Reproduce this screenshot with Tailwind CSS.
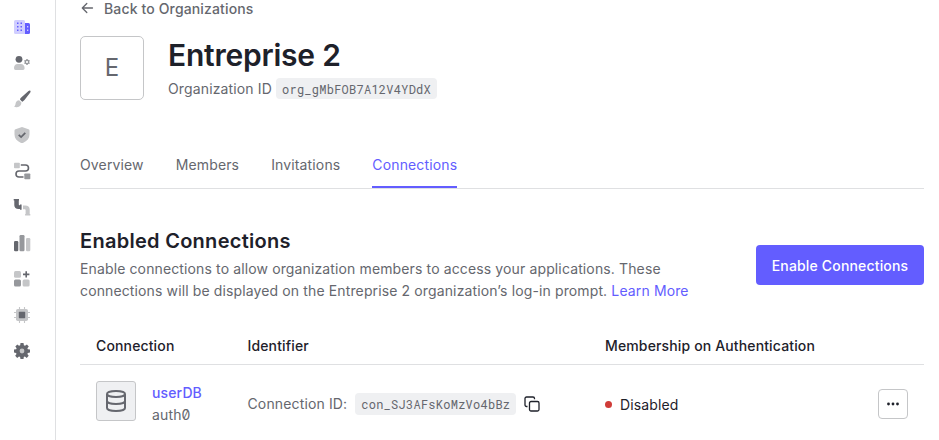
<!DOCTYPE html>
<html lang="en">
<head>
<meta charset="utf-8">
<title>Entreprise 2 - Connections</title>
<script src="https://cdn.jsdelivr.net/npm/@tailwindcss/browser@4"></script>
</head>
<body class="bg-white overflow-hidden font-['Inter',sans-serif] text-[14px] tracking-[0.14px] text-[#65676e]">
<div class="flex h-[440px] w-[939px] overflow-hidden">
  <nav class="flex w-[56px] shrink-0 flex-col gap-5 border-r border-[#dfe0e2] pl-[14px] pt-[19px]">
    <svg class="size-4 shrink-0" viewBox="0 0 16 16"><path d="M1.500 1h8A1.500 1.500 0 0 1 11 2.500V15H1.500A1.500 1.500 0 0 1 0 13.500v-11A1.500 1.500 0 0 1 1.500 1z" fill="#d0ceff"/><path d="M11 4h3.500A1.500 1.500 0 0 1 16 5.500v8a1.500 1.500 0 0 1-1.500 1.500H11z" fill="#635dff"/><path d="M3 3.500h1.500V5H3zM6.500 3.500H8V5H6.500zM3 7h1.500v1.500H3zM6.500 7H8v1.500H6.500zM3 10.500h1.500V12H3zM6.500 10.500H8V12H6.500z" fill="#635dff"/><path d="M13 7h1.300v1.500H13zM13 10.500h1.300V12H13z" fill="#d0ceff"/></svg>
    <svg class="size-4 shrink-0" viewBox="0 0 16 16"><circle cx="5" cy="4.300" r="3.400" fill="#65676e"/><path d="M3.500 9h3.300C9.300 9 10.600 10.800 10.600 13c0 1.300-.5 2-1.600 2H1.600C.5 15 0 14.300 0 13c0-2.200 1.200-4 3.500-4z" fill="#c5c6c8"/><circle cx="13" cy="7" r="1.750" fill="none" stroke="#96989c" stroke-width="1.300"/><path d="M13 4v1M13 9v1M10.400 5.500l.9.500M14.700 8l.9.500M10.400 8.500l.9-.5M14.700 6l.9-.5" stroke="#96989c" stroke-width="1.300"/></svg>
    <svg class="size-4 shrink-0 overflow-visible" viewBox="0 0 16 16"><path d="M16.300-.2c.5.500.3 1.200-.2 1.900l-5.600 7.400c-.7.900-1.600 1.500-2.300 1.600L6 8.500c.1-.8.600-1.500 1.500-2.200L14.500.1c.7-.6 1.400-.7 1.800-.3z" fill="#65676e"/><path d="M5.100 9.300l2.300 2.300c.1 2.700-1.700 4.700-4.400 4.700-1.200 0-2.400-.3-3-.8 1.300-.6 1.300-1.600 1.600-3 .3-1.900 1.500-3.100 3.500-3.200z" fill="#c5c6c8"/></svg>
    <svg class="size-4 shrink-0" viewBox="0 0 16 16"><path d="M8 0l6.500 2.200c.7.200 1 .6 1 1.300v4c0 4-2.600 6.900-7.500 8.900C3.100 14.400.5 11.500.5 7.500v-4c0-.7.300-1.100 1-1.300z" fill="#c5c6c8"/><path d="M4.700 7.900l2.400 2.200 4.200-4.200" fill="none" stroke="#65676e" stroke-width="1.800"/></svg>
    <svg class="size-4 shrink-0 overflow-visible" viewBox="0 0 16 16"><rect x="0" y="-.3" width="5.800" height="5.500" rx=".8" fill="#c5c6c8"/><rect x="10.300" y="10.500" width="6" height="5.800" rx=".8" fill="#96989c"/><path d="M6.800 2h4.700a3 3 0 0 1 0 6H5a3 3 0 0 0 0 6h4.500" fill="none" stroke="#65676e" stroke-width="1.600"/></svg>
    <svg class="size-4 shrink-0 overflow-visible" viewBox="0 0 16 16"><path d="M-.3 0h5.300v1.500h-.2v3.700c0 .8.300 1.100 1.100 1.100H6V5.500h1.600v5.300H6V10H4.500C2 10 .3 8.700.3 6.300V1.500h-.6z" fill="#65676e"/><path d="M9 6.500h2.300c2.700 0 4.400 1.300 4.400 4V15h.6v1.500h-5.200V15h.5v-3.700c0-.8-.3-1.100-1.100-1.100H9z" fill="#c5c6c8"/></svg>
    <svg class="size-4 shrink-0 overflow-visible" viewBox="0 0 16 16"><rect x="0" y="6" width="4.300" height="10.200" rx="1.200" fill="#65676e"/><rect x="5.500" y="0" width="5" height="16.200" rx="1.200" fill="#96989c"/><rect x="12" y="3" width="4.300" height="13.200" rx="1.200" fill="#c5c6c8"/></svg>
    <svg class="size-4 shrink-0 overflow-visible" viewBox="0 0 16 16"><rect x="0" y="0" width="7" height="6.800" rx="1.500" fill="#c5c6c8"/><rect x="0" y="8.500" width="7" height="7" rx="1.500" fill="#96989c"/><rect x="8.600" y="8.500" width="7" height="7" rx="1.500" fill="#c5c6c8"/><path d="M12.200.2v6.400M9 3.400h6.400" stroke="#65676e" stroke-width="1.600"/></svg>
    <svg class="size-4 shrink-0" viewBox="0 0 16 16"><path d="M5.500 0v16M10.500 0v16M0 5.500h16M0 10.500h16" stroke="#c5c6c8" stroke-width="1.100"/><rect x="2" y="2" width="12" height="12" rx="1.800" fill="#c5c6c8"/><rect x="4.800" y="4.800" width="6.400" height="6.400" rx=".6" fill="#65676e"/></svg>
    <svg class="size-4 shrink-0" viewBox="0 0 16 16"><path d="M6.500 0h3l.4 2.200 1.100.5L12.900 1.400 14.800 3.400 13.400 5.200l.4 1.100 2.200.3v3l-2.200.3-.4 1.100 1.300 1.800-2 2.100-1.800-1.400-1.100.5L9.500 16h-3l-.4-2-1.100-.5-1.800 1.400-2-2.100 1.300-1.800-.4-1.100L0 9.600v-3l2.200-.3.400-1.100L1.300 3.400l2-2L5 2.700l1.200-.5z" fill="#65676e"/><circle cx="8" cy="8" r="2.400" fill="#c5c6c8"/></svg>
  </nav>

  <main class="flex w-[868px] shrink-0 flex-col pl-[24px]">
    <a class="flex h-[18px] items-center gap-[10px] pb-[2px] font-medium"><svg class="size-[14px] shrink-0" viewBox="0 0 14 14" fill="none" stroke="#65676e" stroke-width="1.300" stroke-linecap="round" stroke-linejoin="round"><path d="M12.500 7H2.500M6.800 2.500L2.300 7l4.500 4.500"/></svg><span>Back to Organizations</span></a>

    <header class="mt-[18px] flex h-[64px] gap-6">
      <div class="flex size-16 items-center justify-center rounded-[5px] border border-[#c5c6c8] text-[24px] tracking-normal">E</div>
      <div class="flex flex-col">
        <h1 class="h-[38px] text-[30px] leading-[38px] font-semibold tracking-[-0.22px] text-[#1e212a]">Entreprise 2</h1>
        <div class="mt-[4px] flex h-[21px] items-center gap-[4px]"><span>Organization ID</span><code class="flex h-[21px] items-center rounded-[4px] bg-[#eff0f2] px-[6px] font-['Roboto_Mono','Noto_Sans_Mono','Liberation_Mono',monospace] text-[12px] tracking-[0.25px]">org_gMbFOB7A12V4YDdX</code></div>
      </div>
    </header>

    <div class="mt-[49px] flex h-[40px] gap-8 border-b border-[#dfe0e2] leading-[32px]">
      <span>Overview</span><span>Members</span><span>Invitations</span><span class="h-[39px] border-b-2 border-[#635dff] text-[#635dff]">Connections</span>
    </div>

    <section class="mt-[40px] flex h-[74px] justify-between">
      <div>
        <h2 class="h-[29px] text-[20px] leading-[24px] font-semibold tracking-[0.28px] text-[#1e212a]">Enabled Connections</h2>
        <p class="leading-[22px] tracking-[0.127px] whitespace-nowrap">Enable connections to allow organization members to access your applications. These<br>connections will be displayed on the Entreprise 2 organization’s log-in prompt. <a class="text-[#635dff]">Learn More</a></p>
      </div>
      <button class="mt-[16px] h-[40px] w-[168px] rounded-[4px] bg-[#635dff] font-medium tracking-[0.17px] text-white">Enable Connections</button>
    </section>

    <div class="mt-[25px] grid h-[38px] shrink-0 grid-cols-[151.5px_357.5px_1fr] items-center border-b border-[#dfe0e2] pb-px pl-4 font-medium text-[#1e212a]">
      <span>Connection</span><span>Identifier</span><span>Membership on Authentication</span>
    </div>
    <div class="grid h-[77px] shrink-0 grid-cols-[151.5px_357.5px_1fr_30px] items-center pl-4 pr-4">
      <div class="flex items-start gap-4 pb-[6px]">
        <div class="flex size-10 shrink-0 items-center justify-center rounded-[3px] border border-[#c5c6c8] bg-[#eff0f2]"><svg class="size-6" viewBox="0 0 24 24" fill="none" stroke="#65676e" stroke-width="2"><ellipse cx="12" cy="5" rx="9" ry="3"/><path d="M3 5v14c0 1.660 4.030 3 9 3s9-1.340 9-3V5M3 12c0 1.660 4.030 3 9 3s9-1.340 9-3"/></svg></div>
        <div class="h-10 pt-[1px] leading-[22px]"><a class="block font-medium text-[#635dff]">userDB</a><span class="block [font-feature-settings:'zero']">auth0</span></div>
      </div>
      <div class="flex items-center"><span>Connection ID:</span><code class="ml-[8px] flex h-[22px] items-center rounded-[4px] bg-[#eff0f2] px-[6px] font-['Roboto_Mono','Noto_Sans_Mono','Liberation_Mono',monospace] text-[12px] tracking-[0.25px]">con_SJ3AFsKoMzVo4bBz</code><svg class="ml-[8px] size-4" viewBox="0 0 16 16" fill="none" stroke="#1e212a" stroke-width="1.300" stroke-linejoin="round"><rect x="5.500" y="5.500" width="9.500" height="9.500" rx="1.500"/><path d="M3.500 10.500h-1A1.500 1.500 0 0 1 1 9V2.500A1.500 1.500 0 0 1 2.500 1H9a1.500 1.500 0 0 1 1.500 1.500v.8"/></svg></div>
      <div class="flex items-center gap-2 pt-[2px] text-[#1e212a]"><i class="size-[7px] rounded-full bg-[#d03c38]"></i><span>Disabled</span></div>
      <button class="flex size-[30px] items-center justify-center rounded-[4px] border border-[#c5c6c8]"><svg class="h-4 w-4" viewBox="0 0 16 16" fill="#1e212a"><circle cx="3.500" cy="8" r="1.400"/><circle cx="8" cy="8" r="1.400"/><circle cx="12.500" cy="8" r="1.400"/></svg></button>
    </div>
  </main>
</div>
</body>
</html>
